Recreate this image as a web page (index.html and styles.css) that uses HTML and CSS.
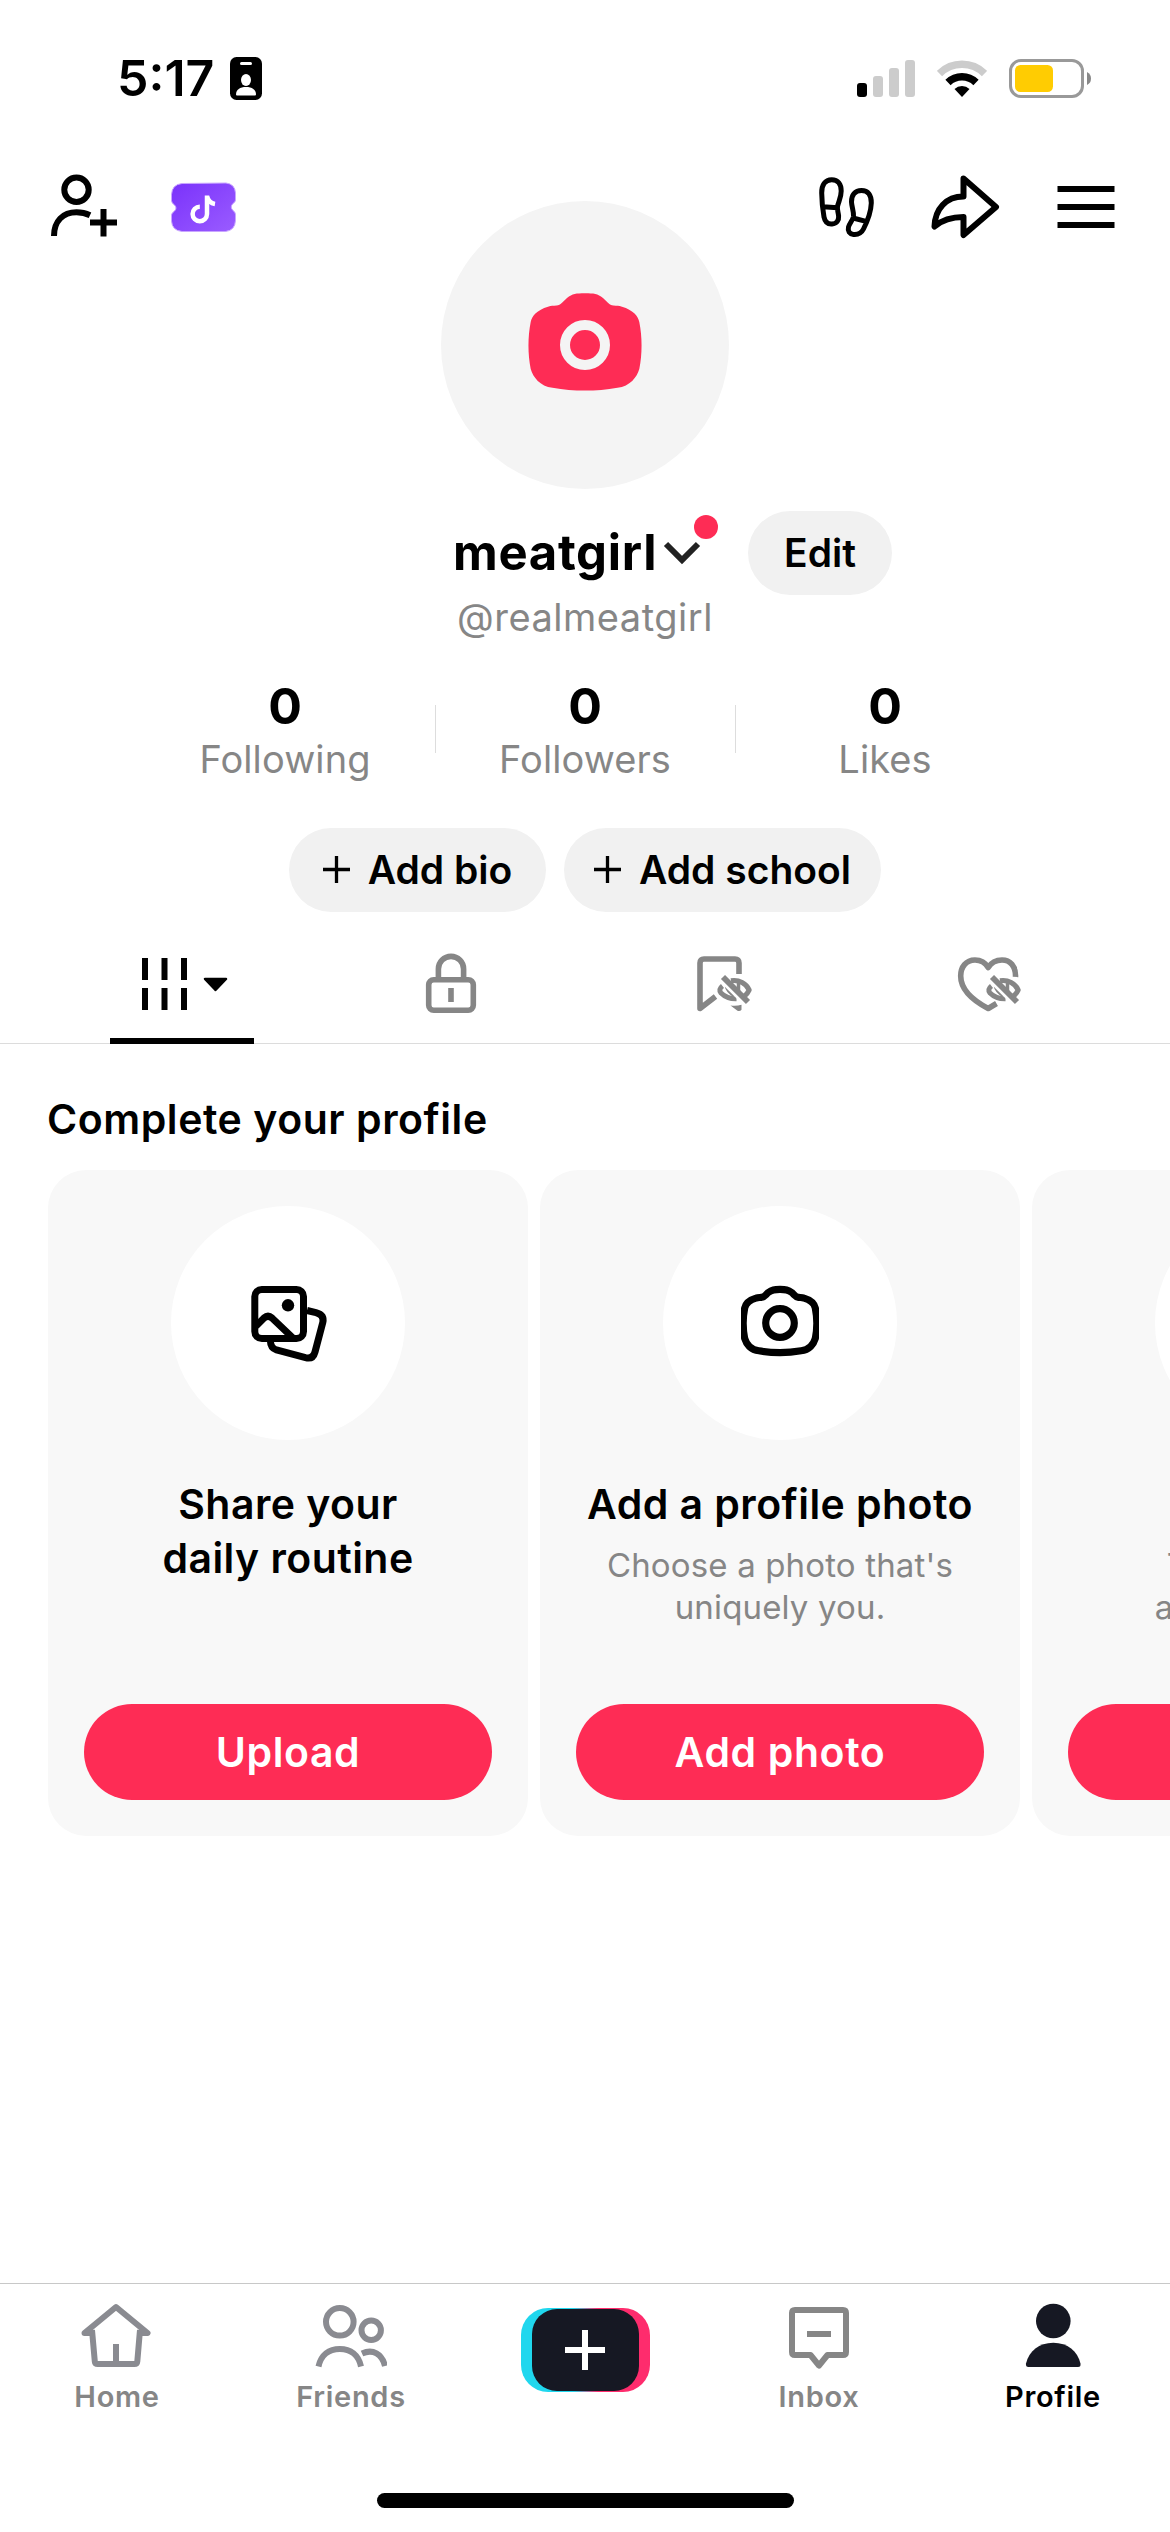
FILE: index.html
```
<!DOCTYPE html>
<html lang="en">
<head>
  <meta charset="UTF-8">
  <title>Profile</title>
  <link rel="stylesheet" href="styles.css">
</head>
<body>
  <div class="phone">
    <header class="status-bar">
      <span class="time">5:17</span>
      <svg class="badge" width="32" height="43" viewBox="0 0 32 43">
        <rect width="32" height="43" rx="6.5"/>
        <rect x="10" y="5" width="12" height="3" rx="1.5" fill="#fff"/>
        <ellipse cx="16" cy="23" rx="5" ry="6" fill="#fff"/>
        <path d="M6 37.5C6 32.5 10 30 16 30s10 2.5 10 7.5q0 1-1 1H7q-1 0-1-1z" fill="#fff"/>
      </svg>
      <div class="status-icons">
        <svg width="58" height="37" viewBox="0 0 58 37" fill="#ccc">
          <rect y="23" width="10" height="14" rx="3" fill="#000"/>
          <rect x="16" y="16" width="10" height="21" rx="3"/>
          <rect x="32" y="8" width="10" height="29" rx="3"/>
          <rect x="48" width="10" height="37" rx="3"/>
        </svg>
        <svg width="50" height="37" viewBox="0 0 50 37" fill="none" stroke-width="7.5">
          <path d="M2.5 13.5a32 32 0 0 1 45 0" stroke="#ccc"/>
          <path d="M11 22.500a20 20 0 0 1 28 0" stroke="#000"/>
          <path d="M25 37l-7.500-8a11 11 0 0 1 15 0z" fill="#000"/>
        </svg>
        <svg width="83" height="39" viewBox="0 0 83 39">
          <rect x="1.5" y="1.5" width="72" height="36" rx="10.5" fill="none" stroke="#999" stroke-width="3"/>
          <rect x="6" y="6" width="38" height="27" rx="5.5" fill="#ffcc02"/>
          <path d="M78 13q4 2 4 6.500T78 26z" fill="#888"/>
        </svg>
      </div>
    </header>

    <section class="top">
      <div class="top-icons">
        <svg class="icon" viewBox="0 0 72 72">
          <circle cx="28.5" cy="18.7" r="12.2"/>
          <path d="M6 65C6 50 15 41.300 28.500 41.300c5 0 9 .8 13.500 2.900"/>
          <path d="M42 51.500h27M55.500 38v27.500"/>
        </svg>
        <svg class="icon" viewBox="0 0 72 72">
          <defs>
            <linearGradient id="ticket" x1="0" y1="0" x2="1" y2="1">
              <stop offset="0" stop-color="#7a32fb"/>
              <stop offset="1" stop-color="#9a5cff"/>
            </linearGradient>
          </defs>
          <path d="M14 12.500L58 12q9 1 9.500 10v7q0 2-2.500 3.500-3.500 3.500 0 7 2.500 1.500 2.500 4v6q-.5 10-10 11H14Q4 59.500 3.500 50v-6q0-2 2.500-3.500 4-3.500 0-7-2.500-1.500-2.500-4v-6q.5-10 10.500-11z" fill="url(#ticket)" stroke="#c9a6ff" stroke-width="1"/>
          <path d="M39 24.500V43a7.200 7.200 0 1 1-7.200-7.200M39 25q1.500 7 8 8" fill="none" stroke="#fff" stroke-width="4.5"/>
        </svg>
      </div>
      <div class="avatar">
        <svg width="120" height="120" viewBox="0 0 120 120">
          <path fill="#fe2c55" d="M60 8.300C51 8.300 47.500 8.700 42 13 37.500 17 36 20 31.500 20.600 28 21 26.500 20.600 23 21.800 12 25 7 31 5.700 37c-3 15-3 32 0 47C8 92 15 101.500 27.500 102.700c21.500 3.800 43.500 3.800 65 0C105 101.500 112 92 114.300 84c3-15 3-32 0-47C113 31 108 25 97 21.800 93.500 20.600 92 21 88.500 20.600 84 20 82.500 17 78 13 72.500 8.700 69 8.300 60 8.300z"/>
          <circle cx="60" cy="60" r="20" fill="none" stroke="#f4f4f4" stroke-width="10"/>
        </svg>
      </div>
      <div class="top-icons right">
        <svg class="icon thin" viewBox="0 0 72 72">
          <path d="M21.700 8.700C15 8.700 11.500 14 11.700 22c.1 8 .8 16 2.300 24 1 5 4 7.300 8 7 5-.3 7-4 6.600-8-.4-4-1.600-6.500-1.100-9.500.8-4.500 3.700-8.500 3.700-15.500 0-7-3.200-11.300-9.500-11.300zM13 35.800l14.500.9"/>
          <path d="M51.500 19.500c-6.500 0-10.200 4.500-10 11.500.2 5 2.500 10 2 14.500-.5 3.500-4 6.500-5 10.500-1 4 1 7 5 7.400 4.500.4 8-1.400 10-5.400 3.500-7 7.500-18 7.800-26 .2-8-3.300-12.500-9.800-12.500zM43 47l13 3.300"/>
        </svg>
        <svg class="icon" viewBox="0 0 72 72">
          <path d="M33.500 7.500L66 36 33.500 64V46C22 46 12 49 4.500 55.500 5 38 16 25.500 33.500 25.500z"/>
        </svg>
        <svg class="icon" viewBox="0 0 72 72">
          <path d="M7.500 18h57M7.500 36h57M7.500 54h57"/>
        </svg>
      </div>
    </section>

    <section class="name-row">
      <h1 class="name">meatgirl</h1>
      <div class="switcher">
        <svg width="38" height="24" viewBox="0 0 38 24" fill="none" stroke="#222" stroke-width="6">
          <path d="M3 3l16 16L35 3"/>
        </svg>
        <span class="dot"></span>
      </div>
      <button class="pill edit">Edit</button>
    </section>
    <div class="handle">@realmeatgirl</div>

    <section class="stats">
      <div class="stat"><strong>0</strong><span class="stat-label">Following</span></div>
      <div class="stat"><strong>0</strong><span class="stat-label">Followers</span></div>
      <div class="stat"><strong>0</strong><span class="stat-label">Likes</span></div>
    </section>

    <section class="add-row">
      <button class="pill add-bio">
        <svg width="27" height="27" viewBox="0 0 27 27" stroke="#000" stroke-width="3.3"><path d="M0 13.500h27M13.500 0v27"/></svg>
        Add bio
      </button>
      <button class="pill add-school">
        <svg width="27" height="27" viewBox="0 0 27 27" stroke="#000" stroke-width="3.3"><path d="M0 13.500h27M13.500 0v27"/></svg>
        Add school
      </button>
    </section>

    <nav class="tabs">
      <div class="tab active">
        <svg width="96" height="72" viewBox="0 0 96 72" fill="none" stroke="#000" stroke-width="6">
          <path d="M11 10v22M30.500 10v22M50 10v22M11 40v22M30.500 40v22M50 40v22"/>
          <path d="M71 31h21L81.500 42z" fill="#000" stroke-width="2.5" stroke-linejoin="round"/>
        </svg>
      </div>
      <div class="tab">
        <svg class="icon gray" viewBox="0 0 72 72">
          <rect x="13.7" y="31.7" width="44.6" height="30.6" rx="5"/>
          <path d="M23.400 31V21a12.600 12.600 0 0 1 25.200 0v10M36 40v14"/>
        </svg>
      </div>
      <div class="tab">
        <svg class="icon gray" viewBox="0 0 72 72">
          <path d="M54 26V15q0-4-4-4H19q-4 0-4 4v45.500l15.500-12"/>
          <path d="M45.500 57.500q6 .8 11-.8v5q-1.500 2-4 1z" fill="#868686" stroke="none"/>
          <g id="eye-off">
            <path d="M37.500 38q-4.500 3.500-1.500 7 6 6 15.500 5.800" stroke-width="5"/>
            <path d="M41 38.500q1 5 8 9.500" stroke-width="2.5"/>
            <path d="M34.600 31.400L60 56.800" stroke="#fff" stroke-width="3"/>
            <path d="M38 29L63 54" stroke-width="5.8"/>
            <path d="M46 32.800c8-1.300 15.500 2.700 18.200 9.200-1.200 3-3.200 5-5.700 7" stroke-width="5"/>
            <path d="M53.500 35v9" stroke-width="3.5"/>
          </g>
        </svg>
      </div>
      <div class="tab">
        <svg class="icon gray" viewBox="0 0 72 72">
          <path d="M61.500 29C62 18 56 12 48 12c-6 0-11 3-13.800 7.500C31.500 15 27 12 21 12 12 12 6.700 19 6.700 28c0 14 13.300 25 27.500 32.500l8.300-5"/>
          <use href="#eye-off"/>
        </svg>
      </div>
    </nav>

    <h2 class="section-title">Complete your profile</h2>
    <section class="cards">
      <article class="card">
        <div class="card-icon">
          <svg width="84" height="84" viewBox="0 0 84 84" fill="none" stroke="#000" stroke-width="7">
            <rect x="8.8" y="8.5" width="48.7" height="49" rx="7"/>
            <circle cx="42" cy="24.3" r="6.2" fill="#000" stroke="none"/>
            <path d="M10 45l8-8q4-3.500 8 0l21.500 20.500"/>
            <path d="M61 29.500l9 2.200q8.500 2.300 6.800 9.800L69 71q-2 7.500-9.500 5.700L30.500 69q-6-2-6.100-9"/>
          </svg>
        </div>
        <h3>Share your<br>daily routine</h3>
        <button class="primary">Upload</button>
      </article>
      <article class="card">
        <div class="card-icon">
          <svg width="78" height="78" viewBox="0 0 120 120" fill="none" stroke="#000" stroke-width="11">
            <path d="M60 8.300C51 8.300 47.500 8.700 42 13 37.500 17 36 20 31.500 20.600 28 21 26.500 20.600 23 21.800 12 25 7 31 5.700 37c-3 15-3 32 0 47C8 92 15 101.500 27.500 102.700c21.500 3.800 43.500 3.800 65 0C105 101.500 112 92 114.300 84c3-15 3-32 0-47C113 31 108 25 97 21.800 93.500 20.600 92 21 88.500 20.600 84 20 82.500 17 78 13 72.500 8.700 69 8.300 60 8.300z"/>
            <circle cx="60" cy="60" r="22"/>
          </svg>
        </div>
        <h3>Add a profile photo</h3>
        <p>Choose a photo that's<br>uniquely you.</p>
        <button class="primary">Add photo</button>
      </article>
      <article class="card">
        <div class="card-icon"></div>
        <h3>Add bio</h3>
        <p>Tell everyone<br>about yourself.</p>
        <button class="primary">Add</button>
      </article>
    </section>

    <footer class="bottom-nav">
      <div class="nav-item">
        <svg class="icon" viewBox="0 0 72 72">
          <path d="M11 33H3.500L35 7l31.500 26H59M11 30l2.800 31.500q.2 2.500 3 2.500h36.500q2.800 0 3-2.500L59 30M35 44v19"/>
        </svg>
        <span>Home</span>
      </div>
      <div class="nav-item">
        <svg class="icon" viewBox="0 0 72 72">
          <circle cx="24.8" cy="21.8" r="13.8"/>
          <circle cx="56.2" cy="30.3" r="9.7"/>
          <path d="M3.500 66.500C6 55 14 49 24.800 49S43.500 55 46 66.500M47 53.500C58 48.500 67 54 70 66"/>
        </svg>
        <span>Friends</span>
      </div>
      <div class="nav-item">
        <div class="create">
          <div class="create-inner">
            <svg width="40" height="40" viewBox="0 0 40 40" stroke="#fff" stroke-width="6"><path d="M0 20h40M20 0v40"/></svg>
          </div>
        </div>
      </div>
      <div class="nav-item inbox">
        <svg class="icon" viewBox="0 0 72 72">
          <path d="M12 10h48q3 0 3 3v39q0 3-3 3H44.500L36 65.500 27.500 55H12q-3 0-3-3V13q0-3 3-3zM24 34h24"/>
        </svg>
        <span>Inbox</span>
      </div>
      <div class="nav-item current">
        <svg width="72" height="72" viewBox="0 0 72 72" fill="#161823">
          <circle cx="36.3" cy="21" r="17.3"/>
          <path d="M9 63.500C12 51 22 42.700 36.300 42.700S60.500 51 63.500 63.500q.5 3.500-2.500 3.500H11.500q-3 0-2.500-3.500z"/>
        </svg>
        <span>Profile</span>
      </div>
    </footer>
    <div class="home-indicator"></div>
  </div>
</body>
</html>
```
FILE: styles.css
```
* {
  box-sizing: border-box;
}

body {
  margin: 0;
  background: #fff;
  color: #000;
  font-family: Inter, "Liberation Sans", sans-serif;
}

h1, h2, h3, p {
  margin: 0;
}

button {
  border: none;
  font-family: inherit;
}

svg {
  display: block;
  flex-shrink: 0;
}

.phone {
  display: flex;
  flex-direction: column;
  width: 1170px;
  height: 2532px;
  overflow: hidden;
}

.icon {
  width: 72px;
  height: 72px;
  fill: none;
  stroke: #000;
  stroke-width: 6;
  stroke-linejoin: round;
}

.icon.thin {
  stroke-width: 5;
}

.icon.gray {
  stroke: #868686;
  stroke-width: 5.6;
}

/* status bar */
.status-bar {
  display: flex;
  align-items: center;
  height: 156px;
  padding: 0 78px 0 117px;
}

.time {
  font-size: 50px;
  font-weight: 600;
}

.badge {
  margin-left: 16px;
}

.status-icons {
  display: flex;
  align-items: center;
  gap: 22px;
  margin-left: auto;
}

/* header */
.top {
  display: flex;
  justify-content: space-between;
  height: 333px;
  padding: 15px 48px 0;
}

.top-icons {
  display: flex;
  gap: 48px;
  width: 312px;
}

.top-icons.right {
  justify-content: flex-end;
}

.avatar {
  display: flex;
  align-items: center;
  justify-content: center;
  width: 288px;
  height: 288px;
  margin-top: 30px;
  border-radius: 50%;
  background: #f4f4f4;
}

.name-row {
  display: flex;
  align-items: center;
  height: 84px;
  margin-top: 22px;
  padding-left: 453px;
}

.name {
  width: 210px;
  font-size: 49px;
  line-height: 60px;
  font-weight: 700;
  letter-spacing: 0.7px;
}

.switcher {
  position: relative;
}

.dot {
  position: absolute;
  top: -26px;
  left: 31px;
  width: 24px;
  height: 24px;
  border-radius: 50%;
  background: #fe2c55;
}

.pill {
  display: flex;
  align-items: center;
  justify-content: center;
  gap: 18px;
  height: 84px;
  padding: 0 0 2px;
  border-radius: 42px;
  background: #f1f1f1;
  color: #000;
  font-size: 39px;
  font-weight: 600;
}

.edit {
  width: 144px;
  margin-left: 47px;
}

.handle {
  height: 44px;
  color: #868686;
  font-size: 38px;
  line-height: 44px;
  letter-spacing: 0.5px;
  text-align: center;
}

/* stats */
.stats {
  display: flex;
  justify-content: center;
  margin-top: 43px;
}

.stat {
  position: relative;
  display: flex;
  flex-direction: column;
  align-items: center;
  width: 300px;
}

.stat + .stat::before {
  content: "";
  position: absolute;
  top: 23px;
  left: 0;
  width: 1px;
  height: 48px;
  background: #ddd;
}

.stat strong {
  font-size: 50px;
  line-height: 48px;
  font-weight: 700;
}

.stat-label {
  color: #868686;
  font-size: 38px;
  line-height: 58px;
  letter-spacing: 0.1px;
}

.add-row {
  display: flex;
  justify-content: center;
  gap: 18px;
  margin-top: 40px;
}

.add-bio {
  width: 257px;
}

.add-school {
  width: 317px;
}

/* tabs */
.tabs {
  display: flex;
  height: 132px;
  padding: 0 45px 0 47px;
  border-bottom: 1px solid #dcdcdc;
}

.tab {
  display: flex;
  flex: 1;
  justify-content: center;
  padding-top: 36px;
}

.tab.active {
  position: relative;
}

.tab.active::after {
  content: "";
  position: absolute;
  bottom: -1px;
  left: 63px;
  width: 144px;
  height: 6px;
  background: #000;
}

/* profile cards */
.section-title {
  margin: 50px 0 26px 47px;
  font-size: 41px;
  line-height: 50px;
  font-weight: 600;
  letter-spacing: 0.55px;
}

.cards {
  display: flex;
  gap: 12px;
  padding-left: 48px;
}

.card {
  display: flex;
  flex-direction: column;
  flex-shrink: 0;
  align-items: center;
  width: 480px;
  height: 666px;
  padding: 36px;
  border-radius: 38px;
  background: #f8f8f8;
  text-align: center;
}

.card-icon {
  display: flex;
  flex-shrink: 0;
  align-items: center;
  justify-content: center;
  width: 234px;
  height: 234px;
  border-radius: 50%;
  background: #fff;
}

.card h3 {
  margin-top: 37px;
  font-size: 41px;
  line-height: 54px;
  font-weight: 600;
  letter-spacing: 0.45px;
}

.card p {
  margin-top: 13px;
  color: #868686;
  font-size: 33px;
  line-height: 42px;
  letter-spacing: 0.15px;
  white-space: nowrap;
}

.primary {
  width: 408px;
  height: 96px;
  margin-top: auto;
  border-radius: 48px;
  background: #fe2c55;
  color: #fff;
  font-size: 41px;
  font-weight: 600;
  letter-spacing: 0.6px;
}

/* bottom navigation */
.bottom-nav {
  display: flex;
  height: 210px;
  margin-top: auto;
  border-top: 1px solid #c8c8c8;
}

.nav-item {
  display: flex;
  flex: 1;
  flex-direction: column;
  align-items: center;
  padding-top: 16px;
  color: #868686;
  font-size: 29px;
  font-weight: 600;
  letter-spacing: 0.7px;
}

.nav-item span {
  margin-top: 6px;
  line-height: 38px;
}

.nav-item .icon {
  stroke: #8a8b91;
}

.nav-item.inbox .icon {
  stroke: #868686;
}

.nav-item.current {
  color: #000;
}

.create {
  width: 129px;
  height: 84px;
  margin-top: 8px;
  padding: 1px 11px;
  border-radius: 27px;
  background: linear-gradient(90deg, #20d7ee 40%, #fe2c6d 60%);
}

.create-inner {
  display: flex;
  align-items: center;
  justify-content: center;
  height: 82px;
  border-radius: 25px;
  background: #161823;
}

.home-indicator {
  width: 417px;
  height: 15px;
  margin: 0 auto 24px;
  border-radius: 8px;
  background: #000;
}
```
